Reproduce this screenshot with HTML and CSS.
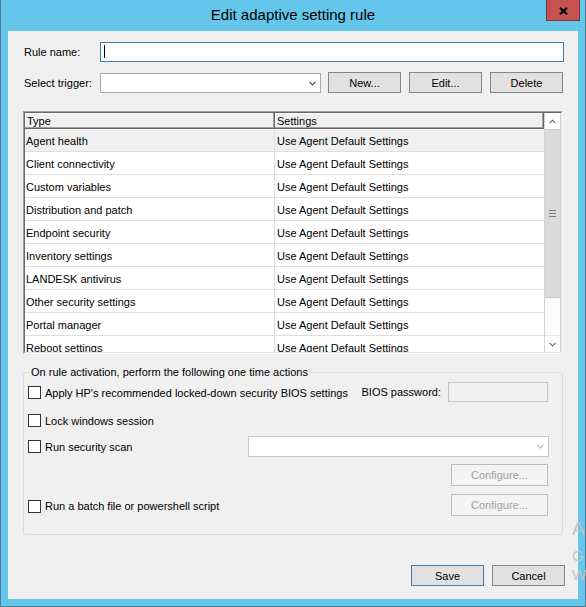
FILE: index.html
```html
<!DOCTYPE html>
<html>
<head>
<meta charset="utf-8">
<title>Edit adaptive setting rule</title>
<link rel="stylesheet" href="styles.css">
</head>
<body>
<div class="window">
  <div class="titlebar">
    <span class="title">Edit adaptive setting rule</span>
    <div class="close">
      <svg width="9" height="8" viewBox="0 0 9 8"><path d="M1 0.8 L8 7.2 M8 0.8 L1 7.2" stroke="#000" stroke-width="2.2" fill="none"/></svg>
    </div>
  </div>
  <div class="client">
    <div class="row r1">
      <span class="lbl">Rule name:</span>
      <div class="textbox"><span class="caret"></span></div>
    </div>
    <div class="row r2">
      <span class="lbl">Select trigger:</span>
      <div class="combo trig">
        <svg width="7" height="5" viewBox="0 0 7 5"><path d="M0.5 0.8 L3.5 3.8 L6.5 0.8" stroke="#505050" stroke-width="1.2" fill="none"/></svg>
      </div>
      <button class="btn b-new">New...</button>
      <button class="btn b-edit">Edit...</button>
      <button class="btn b-del">Delete</button>
    </div>
    <div class="list">
      <div class="list-inner">
        <div class="grid">
          <div class="hdr">
            <div class="hc c1">Type</div>
            <div class="hc c2">Settings</div>
          </div>
          <div class="tbody">
            <div class="tr sel"><div class="td c1">Agent health</div><div class="td c2">Use Agent Default Settings</div></div>
            <div class="tr"><div class="td c1">Client connectivity</div><div class="td c2">Use Agent Default Settings</div></div>
            <div class="tr"><div class="td c1">Custom variables</div><div class="td c2">Use Agent Default Settings</div></div>
            <div class="tr"><div class="td c1">Distribution and patch</div><div class="td c2">Use Agent Default Settings</div></div>
            <div class="tr"><div class="td c1">Endpoint security</div><div class="td c2">Use Agent Default Settings</div></div>
            <div class="tr"><div class="td c1">Inventory settings</div><div class="td c2">Use Agent Default Settings</div></div>
            <div class="tr"><div class="td c1">LANDESK antivirus</div><div class="td c2">Use Agent Default Settings</div></div>
            <div class="tr"><div class="td c1">Other security settings</div><div class="td c2">Use Agent Default Settings</div></div>
            <div class="tr"><div class="td c1">Portal manager</div><div class="td c2">Use Agent Default Settings</div></div>
            <div class="tr"><div class="td c1">Reboot settings</div><div class="td c2">Use Agent Default Settings</div></div>
          </div>
        </div>
        <div class="vscroll">
          <div class="sbtn up">
            <svg width="7" height="5" viewBox="0 0 7 5"><path d="M0.5 4.2 L3.5 1.2 L6.5 4.2" stroke="#606060" stroke-width="1.1" fill="none"/></svg>
          </div>
          <div class="track">
            <div class="thumb">
              <svg width="7" height="7" viewBox="0 0 7 7"><path d="M0 0.5 H7 M0 3.5 H7 M0 6.5 H7" stroke="#7a7a7a" stroke-width="1" fill="none"/></svg>
            </div>
          </div>
          <div class="sbtn down">
            <svg width="7" height="5" viewBox="0 0 7 5"><path d="M0.5 0.8 L3.5 3.8 L6.5 0.8" stroke="#606060" stroke-width="1.1" fill="none"/></svg>
          </div>
        </div>
      </div>
    </div>
    <fieldset class="group">
      <legend>On rule activation, perform the following one time actions</legend>
      <div class="grow gA">
        <span class="chk"></span><span class="txt">Apply HP's recommended locked-down security BIOS settings</span>
        <span class="pwlbl">BIOS password:</span>
        <div class="pwbox"></div>
      </div>
      <div class="grow gB">
        <span class="chk"></span><span class="txt">Lock windows session</span>
      </div>
      <div class="grow gC">
        <span class="chk"></span><span class="txt">Run security scan</span>
        <div class="combo scan">
          <svg width="7" height="5" viewBox="0 0 7 5"><path d="M0.5 0.8 L3.5 3.8 L6.5 0.8" stroke="#b4b4b4" stroke-width="1.2" fill="none"/></svg>
        </div>
      </div>
      <div class="grow gD">
        <button class="cfg">Configure...</button>
      </div>
      <div class="grow gE">
        <span class="chk"></span><span class="txt">Run a batch file or powershell script</span>
        <button class="cfg">Configure...</button>
      </div>
    </fieldset>
    <div class="footer">
      <button class="btn default">Save</button>
      <button class="btn">Cancel</button>
    </div>
  </div>
</div>
<div class="watermark">
  <div class="wm1">A</div>
  <div class="wm2">G</div>
  <div class="wm3">W</div>
</div>
</body>
</html>
```
FILE: styles.css
```css
html, body {
  margin: 0;
  padding: 0;
  width: 586px;
  height: 607px;
  overflow: hidden;
}
body {
  position: relative;
  font-family: "Liberation Sans", Arial, sans-serif;
  font-size: 11px;
  color: #000;
}
.window {
  box-sizing: border-box;
  width: 586px;
  height: 607px;
  background: #63c6ea;
  border: 1px solid #4b8096;
  border-top: none;
  display: flex;
  flex-direction: column;
}
.titlebar {
  position: relative;
  height: 31px;
  flex: none;
  box-sizing: border-box;
  padding-bottom: 1px;
  display: flex;
  align-items: center;
  justify-content: center;
  font-size: 15px;
  color: #000;
}
.title {
  line-height: 30px;
}
.close {
  position: absolute;
  top: 0;
  right: 5px;
  width: 34px;
  height: 21px;
  box-sizing: border-box;
  background: #c75050;
  border: 1px solid #6e3a3a;
  border-top: none;
  display: flex;
  align-items: center;
  justify-content: center;
  padding-top: 1px;
}
.close svg { display: block; }
.client {
  margin: 0 7px;
  height: 568px;
  flex: none;
  box-sizing: border-box;
  background: #f0f0f0;
  padding: 11px 15px 0 15px;
  display: flex;
  flex-direction: column;
}
.row {
  display: flex;
  align-items: center;
  margin-left: 1px;
  flex: none;
}
.lbl {
  width: 76px;
  flex: none;
  white-space: nowrap;
}
.r1 { height: 20px; }
.textbox {
  flex: 1;
  height: 20px;
  box-sizing: border-box;
  border: 1px solid #3c7fb1;
  background: #fff;
  margin-right: -1px;
}
.caret {
  display: block;
  width: 1px;
  height: 13px;
  background: #000;
  margin: 2px 0 0 3px;
}
.r2 {
  height: 21px;
  margin-top: 10px;
}
.combo {
  box-sizing: border-box;
  background: #fff;
  display: flex;
  align-items: center;
  justify-content: flex-end;
  padding-right: 4px;
}
.combo svg { display: block; }
.trig {
  width: 221px;
  height: 20px;
  align-self: flex-start;
  margin-top: 1px;
  border: 1px solid #a9abb1;
}
.btn {
  width: 73px;
  height: 21px;
  box-sizing: border-box;
  border: 1px solid #858585;
  background: #e1e1e1;
  font-family: inherit;
  font-size: 11px;
  color: #000;
  padding: 0;
  margin: 0;
  flex: none;
}
.b-new { margin-left: 7px; }
.b-edit, .b-del { margin-left: 8px; }
.list {
  margin-top: 18px;
  height: 243px;
  flex: none;
  box-sizing: border-box;
  border: 1px solid;
  border-color: #a0a0a0 #ffffff #ffffff #a0a0a0;
}
.list-inner {
  height: 100%;
  box-sizing: border-box;
  border: 1px solid;
  border-color: #696969 #e3e3e3 #e3e3e3 #696969;
  background: #fff;
  display: flex;
}
.grid {
  flex: 1;
  min-width: 0;
  display: flex;
  flex-direction: column;
  overflow: hidden;
}
.hdr {
  display: flex;
  height: 16px;
  flex: none;
}
.hc {
  box-sizing: border-box;
  height: 16px;
  background: #f0f0f0;
  border-right: 1px solid #696969;
  border-bottom: 1px solid #696969;
  box-shadow: inset -1px -1px 0 #a0a0a0, inset 1px 1px 0 #ffffff;
  padding-left: 2px;
  line-height: 16px;
  white-space: nowrap;
}
.c1 { width: 250px; flex: none; }
.c2 { flex: 1; }
.tbody {
  flex: 1;
  overflow: hidden;
}
.tr {
  display: flex;
  height: 23px;
  box-sizing: border-box;
  border-bottom: 1px solid #dedede;
}
.tr.sel { background: #f0f0f0; }
.td {
  line-height: 22px;
  padding-top: 1px;
  white-space: nowrap;
  box-sizing: border-box;
  padding-left: 2px;
}
.td.c1 {
  border-right: 1px solid #dedede;
  padding-left: 1px;
}
.vscroll {
  width: 17px;
  flex: none;
  box-sizing: border-box;
  border-left: 1px solid #d4d4d4;
  display: flex;
  flex-direction: column;
  background: #fcfcfc;
}
.sbtn {
  box-sizing: border-box;
  background: #fff;
  border-right: 1px solid #d4d4d4;
  display: flex;
  align-items: center;
  justify-content: center;
  flex: none;
}
.sbtn svg { display: block; }
.sbtn.up { height: 16px; }
.sbtn.down { height: 17px; border-top: 1px solid #e6e6e6; }
.track {
  flex: 1;
  border-right: 1px solid #d4d4d4;
}
.thumb {
  height: 169px;
  box-sizing: border-box;
  background: #dadada;
  border-top: 1px solid #c6c6c6;
  border-bottom: 1px solid #c6c6c6;
  display: flex;
  align-items: center;
  justify-content: center;
}
.thumb svg { display: block; }
.group {
  margin: 12px 0 0 0;
  padding: 3px 14px 18px 4px;
  border: 1px solid #dcdcdc;
  border-radius: 3px;
  min-width: 0;
  width: 540px;
  box-sizing: border-box;
  flex: none;
}
.group legend {
  padding: 0 1px;
  margin-left: 2px;
  line-height: 13px;
  font-size: 11px;
}
.grow {
  display: flex;
  align-items: center;
  white-space: nowrap;
}
.chk {
  width: 13px;
  height: 13px;
  box-sizing: border-box;
  border: 1px solid #333;
  background: #fff;
  margin-right: 4px;
  flex: none;
}
.gA { height: 20px; }
.gA .txt { margin-top: 2px; }
.gB { height: 21px; margin-top: 8px; }
.gC { height: 21px; margin-top: 5px; }
.gD { height: 22px; margin-top: 7px; justify-content: flex-end; }
.gE { height: 22px; margin-top: 8px; }
.gE .chk, .gE .txt { margin-top: 2px; }
.pwlbl {
  margin-left: auto;
  margin-right: 7px;
}
.pwbox {
  width: 100px;
  height: 20px;
  box-sizing: border-box;
  border: 1px solid #c4c4c4;
  background: #f0f0f0;
  flex: none;
}
.scan {
  margin-left: auto;
  margin-right: -1px;
  width: 301px;
  height: 21px;
  border: 1px solid #c8c8c8;
}
.cfg {
  width: 97px;
  height: 22px;
  box-sizing: border-box;
  border: 1px solid #bcbcbc;
  background: #f4f4f4;
  color: #a0a0a0;
  font-family: inherit;
  font-size: 11px;
  padding: 0;
  margin: 0;
  flex: none;
}
.gE .cfg { margin-left: auto; }
.footer {
  display: flex;
  justify-content: flex-end;
  gap: 8px;
  margin-top: 30px;
  margin-right: -2px;
  flex: none;
}
.btn.default { border-color: #3c7fb1; }
.watermark {
  position: absolute;
  left: 572px;
  top: 519px;
  color: #c3c3c3;
  white-space: nowrap;
  font-family: "Liberation Sans", Arial, sans-serif;
}
.wm1 { font-size: 19px; line-height: 20px; }
.wm2 { font-size: 15px; line-height: 19px; margin-top: 7px; }
.wm3 { font-size: 15px; line-height: 19px; }
```
